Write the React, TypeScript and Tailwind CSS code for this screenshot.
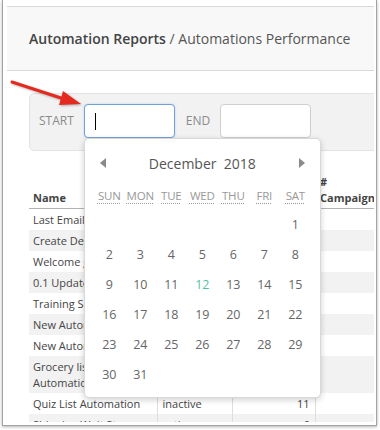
import React from 'react';

type Row = { name: string; status: string; runs: string; ruled?: boolean; striped: boolean };

const rows: Array<Row> = [
  { name: 'Last Email Sequence', status: 'active', runs: '4', striped: false },
  { name: 'Create Deal Task', status: 'active', runs: '2', striped: true },
  { name: 'Welcome greeting', status: 'inactive', runs: '7', striped: false },
  { name: '0.1 Update Contact', status: 'active', runs: '3', striped: true },
  { name: 'Training Sales', status: 'inactive', runs: '5', striped: false },
  { name: 'New Automation', status: 'inactive', runs: '0', striped: true },
  { name: 'New Automation', status: 'inactive', runs: '0', striped: false },
  { name: 'Grocery list signup Automation', status: 'active', runs: '9', striped: true },
  { name: 'Quiz List Automation', status: 'inactive', runs: '11', ruled: true, striped: false },
  { name: 'Shipping Wait Step', status: 'active', runs: '6', ruled: true, striped: true },
];

const weekDays = ['SUN', 'MON', 'TUE', 'WED', 'THU', 'FRI', 'SAT'];

// december 2018 starts on a saturday
const days: Array<number | null> = [...Array(6).fill(null), ...Array.from({ length: 31 }, (_, i) => i + 1)];

const DatePicker: React.FC = () => (
  <div className="absolute top-[34px] left-0 z-10 h-[260px] w-[237px] rounded-[5px] border border-[#d8d8d8] bg-white shadow-[0_2px_6px_rgba(0,0,0,0.18)]">
    <div className="mt-[14px] flex h-[20px] items-center justify-between px-[15px]">
      <svg width="7" height="10" viewBox="0 0 7 10">
        <polygon points="6,0 6,10 0,5" fill="#8a8a8a" />
      </svg>
      <span className="text-[14px] text-[#555] whitespace-pre">December  2018</span>
      <svg width="7" height="10" viewBox="0 0 7 10">
        <polygon points="1,0 1,10 7,5" fill="#8a8a8a" />
      </svg>
    </div>
    <div className="mt-[13px] grid h-[20px] grid-cols-7 items-center px-[9px]">
      {weekDays.map(d => (
        <abbr
          key={d}
          className="text-center text-[11.5px] tracking-[-0.2px] text-[#999] underline decoration-dotted decoration-[#999] underline-offset-[3px]"
        >
          {d}
        </abbr>
      ))}
    </div>
    <div className="mt-[4px] grid grid-cols-7 px-[9px]">
      {days.map((d, i) => (
        <div
          key={i}
          className={`flex h-[30px] items-center justify-center text-[12.5px] ${d === 12 ? 'text-[#4fc39e]' : 'text-[#666]'}`}
        >
          {d ?? ''}
        </div>
      ))}
    </div>
  </div>
);

export default function App() {
  return (
    <div className="relative h-[430px] w-[380px] overflow-hidden bg-white font-['Open_Sans',sans-serif]">
      <div className="ml-[2px] flex h-[426px] w-[375px] flex-col border-x border-b border-[#a3a3a3] bg-white pt-[6px] pr-[2px] pb-[3px] pl-[4px] shadow-[0_1px_3px_rgba(0,0,0,0.3)]">
        <div className="flex flex-1 flex-col overflow-hidden">
          {/* page header */}
          <div className="flex h-[65px] shrink-0 items-center border-y border-[#d9d9d9] bg-[#f8f8f8] pl-[22px] text-[14px] text-[#555]">
            <span className="font-semibold text-[#444]">Automation Reports</span>
            <span>&nbsp;/ Automations Performance</span>
          </div>

          <div className="pl-[22px]">
            {/* date filter */}
            <div className="mt-[22px] flex h-[58px] w-[380px] items-start rounded-l-[5px] border border-[#e3e3e3] bg-[#f2f2f2] pt-[10px] pl-[9px]">
              <span className="mt-[8px] text-[12px] text-[#8a8a8a]">START</span>
              <div className="relative ml-[10px]">
                <div className="flex h-[34px] w-[91px] items-center rounded-[4px] border border-[#72a0d8] bg-white pl-[10px] shadow-[0_0_2px_rgba(102,160,230,0.45)]">
                  <div className="h-[17px] w-px bg-black" />
                </div>
                <DatePicker />
              </div>
              <span className="mt-[8px] ml-[11px] text-[12px] text-[#8a8a8a]">END</span>
              <div className="ml-[10px] h-[34px] w-[91px] rounded-[4px] border border-[#cfcfcf] bg-white" />
            </div>

            {/* report table */}
            <table className="mt-[20px] w-[440px] table-fixed border-collapse text-[11px] leading-[16px] text-[#444]">
              <colgroup>
                <col className="w-[128px]" />
                <col className="w-[75px]" />
                <col className="w-[83px]" />
                <col className="w-[154px]" />
              </colgroup>
              <thead>
                <tr className="border-b border-[#b3b3b3]">
                  <th className="px-[4px] pt-[3px] pb-[2px] text-left align-bottom font-bold">Name</th>
                  <th className="px-[5px] pt-[3px] pb-[2px] text-left align-bottom font-bold">Status</th>
                  <th className="px-[5px] pt-[3px] pb-[2px] text-left align-bottom font-bold"># Runs</th>
                  <th className="px-[5px] pt-[3px] pb-[2px] text-left align-bottom font-bold">
                    #
                    <br />
                    Campaigns
                  </th>
                </tr>
              </thead>
              <tbody>
                {rows.map((row, i) => (
                  <tr key={i} className={row.striped ? 'bg-[#f2f2f2]' : 'bg-white'}>
                    <td className={`px-[4px] py-[2.5px] align-top ${row.ruled ? 'border-r border-[#dedede]' : ''}`}>{row.name}</td>
                    <td className={`px-[5px] py-[2.5px] align-top ${row.ruled ? 'border-r border-[#dedede]' : ''}`}>{row.status}</td>
                    <td className={`px-[5px] py-[2.5px] text-right align-top ${row.ruled ? 'border-r border-[#dedede]' : ''}`}>{row.runs}</td>
                    <td className="px-[5px] py-[2.5px]" />
                  </tr>
                ))}
              </tbody>
            </table>
          </div>
        </div>
      </div>

      {/* red pointer arrow */}
      <svg
        className="pointer-events-none absolute top-0 left-0 drop-shadow-[1px_1px_1px_rgba(0,0,0,0.3)]"
        width="100"
        height="120"
        viewBox="0 0 100 120"
      >
        <line x1="12" y1="82" x2="64" y2="99" stroke="#e42a1e" strokeWidth="3" strokeLinecap="round" />
        <polygon points="63,91 81,104 59,105" fill="#e42a1e" />
      </svg>
    </div>
  );
}
